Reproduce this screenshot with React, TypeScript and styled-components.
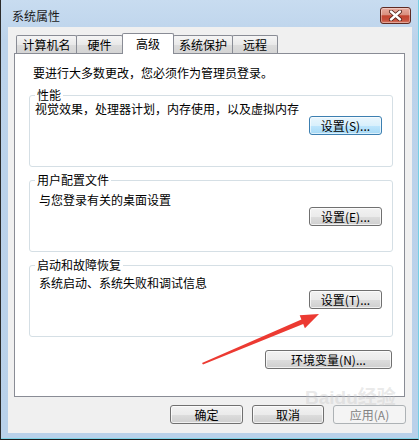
import React from "react";
import styled, { createGlobalStyle, css } from "styled-components";

const Global = createGlobalStyle`
  html, body { margin: 0; padding: 0; background: #ffffff; }
  body {
    font-family: "Noto Sans CJK SC", "Noto Sans", sans-serif;
    font-size: 12px;
    color: #000;
  }
`;

const Window = styled.div`
  position: relative;
  width: 419px;
  height: 440px;
  box-sizing: border-box;
  border-left: 1px solid #2b2b2b;
  border-right: 1px solid #74cfe3;
  border-bottom: 1px solid #1c1c1c;
  box-shadow: inset 0 -1px 0 #7fd3e6;
  background: linear-gradient(#c8dcf0 0px, #bcd3eb 40px, #b9d1ea 100%);
  display: flex;
  flex-direction: column;
  overflow: hidden;
`;

const TitleBar = styled.div`
  height: 27px;
  flex: none;
  display: flex;
  align-items: flex-start;
  justify-content: space-between;
  padding: 0 7px 0 11px;
`;

const Title = styled.div`
  margin-top: 8px;
  line-height: 16px;
  font-size: 12px;
  color: #1a1a1a;
`;

const CloseBtn = styled.div`
  margin-top: 7px;
  width: 31px;
  height: 17px;
  box-sizing: border-box;
  border: 1px solid #5f2a22;
  border-radius: 3px;
  background: linear-gradient(#e8ab9f 0%, #d9907f 45%, #c2442f 52%, #c64f3c 80%, #d67c66 100%);
  box-shadow: inset 0 0 0 1px rgba(255, 255, 255, 0.35);
  display: flex;
  align-items: center;
  justify-content: center;
`;

const Client = styled.div`
  flex: 1;
  margin: 0 6px 6px 7px;
  background: #f0f0f0;
  display: flex;
  flex-direction: column;
  padding: 6px 7px 0 6px;
`;

const TabStrip = styled.div`
  height: 20px;
  display: flex;
  align-items: flex-end;
  padding-left: 2px;
`;

const Tab = styled.div<{ $w: number; $active?: boolean }>`
  box-sizing: border-box;
  width: ${(p) => p.$w}px;
  height: 18px;
  margin-left: -1px;
  border: 1px solid #898c95;
  border-bottom: none;
  border-radius: 2px 2px 0 0;
  background: linear-gradient(#f5f5f5, #e9e9e9 50%, #dcdcdc 52%, #d4d4d4);
  display: flex;
  align-items: center;
  justify-content: center;
  line-height: 14px;
  padding-top: 1px;
  &:first-child { margin-left: 0; }
  ${(p) =>
    p.$active &&
    css`
      height: 21px;
      margin-bottom: -1px;
      background: #ffffff;
      position: relative;
      z-index: 1;
      padding-top: 0;
    `}
`;

const Panel = styled.div`
  box-sizing: border-box;
  height: 344px;
  border: 1px solid #898c95;
  background: #ffffff;
  display: flex;
  flex-direction: column;
  padding: 11px 11px 0 14px;
`;

const Intro = styled.div`
  padding-left: 4px;
  line-height: 16px;
`;

const GroupStack = styled.div`
  margin-top: 7px;
  display: flex;
  flex-direction: column;
  gap: 6px;
`;

const Group = styled.fieldset`
  margin: 0;
  min-width: 0;
  height: 79px;
  box-sizing: border-box;
  border: 1px solid #d5dfe5;
  border-radius: 3px;
  padding: 0 10px 9px 0;
  display: flex;
  flex-direction: column;
`;

const Legend = styled.legend`
  margin-left: 5px;
  padding: 0 2px;
  line-height: 14px;
  font-size: 12px;
`;

const GroupText = styled.div<{ $indent: number; $top: number }>`
  padding-left: ${(p) => p.$indent}px;
  margin-top: ${(p) => p.$top}px;
  line-height: 14px;
`;

const Button = styled.button<{ $w: number; $focus?: boolean }>`
  box-sizing: border-box;
  width: ${(p) => p.$w}px;
  height: 19px;
  padding: 0;
  font-family: "Noto Sans CJK SC", "Noto Sans", sans-serif;
  font-size: 12px;
  line-height: 14px;
  color: #000;
  border: 1px solid #707070;
  border-radius: 3px;
  background: linear-gradient(#f2f2f2 0%, #ebebeb 50%, #dddddd 51%, #cfcfcf 100%);
  box-shadow: inset 0 0 0 1px rgba(255, 255, 255, 0.7);
  display: flex;
  align-items: center;
  justify-content: center;
  ${(p) =>
    p.$focus &&
    css`
      border-color: #3c7fb1;
      background: linear-gradient(#eaf6fd 0%, #d9f0fc 50%, #bee6fd 51%, #a7d9f5 100%);
      box-shadow: inset 0 0 0 1px rgba(255, 255, 255, 0.6);
    `}
  &:disabled {
    color: #838383;
    border-color: #adb2b5;
    background: #f4f4f4;
    box-shadow: none;
  }
`;

const GroupButton = styled(Button)`
  margin-top: auto;
  align-self: flex-end;
`;

const EnvRow = styled.div`
  margin-top: 13px;
  display: flex;
  justify-content: flex-end;
  padding-right: 1px;
`;

const FooterRow = styled.div`
  margin-top: 8px;
  display: flex;
  justify-content: flex-end;
  gap: 9px;
  margin-right: -1px;
`;

const Overlay = styled.svg`
  position: absolute;
  left: 0;
  top: 0;
  pointer-events: none;
`;

const Watermark = styled.div`
  position: absolute;
  left: 304px;
  top: 388px;
  color: rgba(200, 200, 200, 0.4);
  font-family: "Liberation Sans", "Noto Sans CJK SC", sans-serif;
  font-size: 19px;
  font-weight: bold;
  line-height: 20px;
  pointer-events: none;
`;

const tabs = [
  { label: "计算机名", w: 61 },
  { label: "硬件", w: 47 },
  { label: "高级", w: 52, active: true },
  { label: "系统保护", w: 60 },
  { label: "远程", w: 46 },
];

const groups = [
  { legend: "性能", text: "视觉效果，处理器计划，内存使用，以及虚拟内存", btn: "设置(S)...", indent: 5, top: 0, focus: true },
  { legend: "用户配置文件", text: "与您登录有关的桌面设置", btn: "设置(E)...", indent: 9, top: 6 },
  { legend: "启动和故障恢复", text: "系统启动、系统失败和调试信息", btn: "设置(T)...", indent: 9, top: 4 },
];

export default function App() {
  return (
    <>
      <Global />
      <Window>
        <TitleBar>
          <Title>系统属性</Title>
          <CloseBtn>
            <svg width="15" height="11" viewBox="0 0 15 11">
              <path d="M3 1.5 L12 9.5 M12 1.5 L3 9.5" stroke="#4a1a12" strokeWidth="4" strokeLinecap="round" />
              <path d="M3 1.5 L12 9.5 M12 1.5 L3 9.5" stroke="#ffffff" strokeWidth="2.4" strokeLinecap="round" />
            </svg>
          </CloseBtn>
        </TitleBar>
        <Client>
          <TabStrip>
            {tabs.map((t) => (
              <Tab key={t.label} $w={t.w} $active={t.active}>
                {t.label}
              </Tab>
            ))}
          </TabStrip>
          <Panel>
            <Intro>要进行大多数更改，您必须作为管理员登录。</Intro>
            <GroupStack>
              {groups.map((g) => (
                <Group key={g.legend}>
                  <Legend>{g.legend}</Legend>
                  <GroupText $indent={g.indent} $top={g.top}>
                    {g.text}
                  </GroupText>
                  <GroupButton $w={73} $focus={g.focus}>
                    {g.btn}
                  </GroupButton>
                </Group>
              ))}
            </GroupStack>
            <EnvRow>
              <Button $w={127}>环境变量(N)...</Button>
            </EnvRow>
          </Panel>
          <FooterRow>
            <Button $w={73}>确定</Button>
            <Button $w={72}>取消</Button>
            <Button $w={73} disabled>
              应用(A)
            </Button>
          </FooterRow>
        </Client>
        <Watermark>Baidu经验</Watermark>
        <Overlay width="419" height="440" viewBox="0 0 419 440">
          <polygon
            points="201,363 300.4,319.4 298.7,315.3 318,314 303.9,328.2 302.2,324.1 202,364.5"
            fill="#ec3a32"
          />
        </Overlay>
      </Window>
    </>
  );
}
